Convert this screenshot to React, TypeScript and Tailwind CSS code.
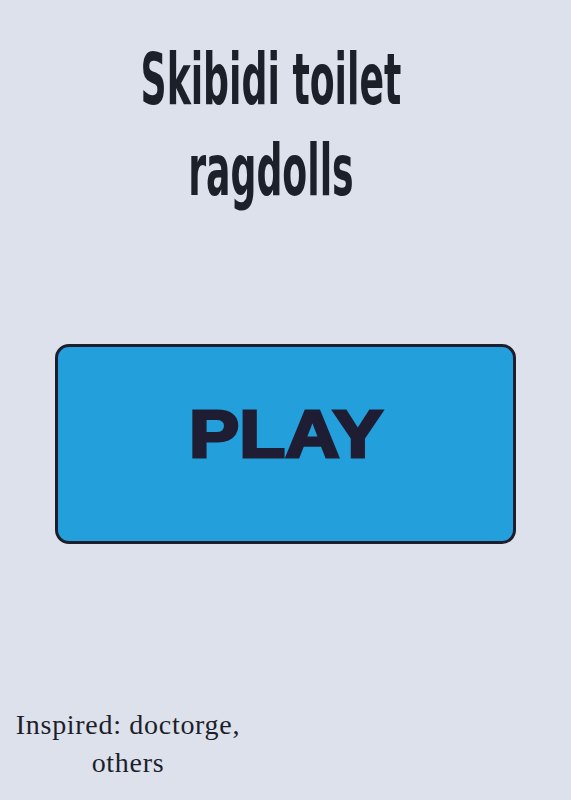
export default function App() {
  return (
    <div className="min-h-[800px] w-full bg-[#dde1ec] flex flex-col">
      {/* Title */}
      <div className="pt-[34px] pr-[30px] flex flex-col items-center">
        <h1 className="text-[#1c2028] font-bold text-[71px] leading-[91px] text-center scale-x-[0.567] whitespace-nowrap [font-family:'DejaVu_Sans_Condensed','DejaVu_Sans',sans-serif]">
          Skibidi toilet
          <br />
          ragdolls
        </h1>
      </div>

      {/* Play button */}
      <div className="mt-[128px] px-[55px]">
        <button className="w-full h-[200px] rounded-[14px] border-[3px] border-[#1e1d2e] bg-[#239fdc] flex justify-center pt-[54px]">
          <span className="inline-block scale-x-[1.14] text-[#1f1d33] text-[66px] leading-none font-bold [-webkit-text-stroke:3px_#1f1d33] [font-family:'Liberation_Sans',Arial,sans-serif]">
            PLAY
          </span>
        </button>
      </div>

      {/* Credits */}
      <div className="mt-[162px] w-[256px] text-center text-[28px] leading-[38px] tracking-[0.7px] text-[#1c1f2a] [font-family:'Liberation_Serif','Times_New_Roman',serif]">
        Inspired: doctorge,
        <br />
        others
      </div>
    </div>
  );
}
